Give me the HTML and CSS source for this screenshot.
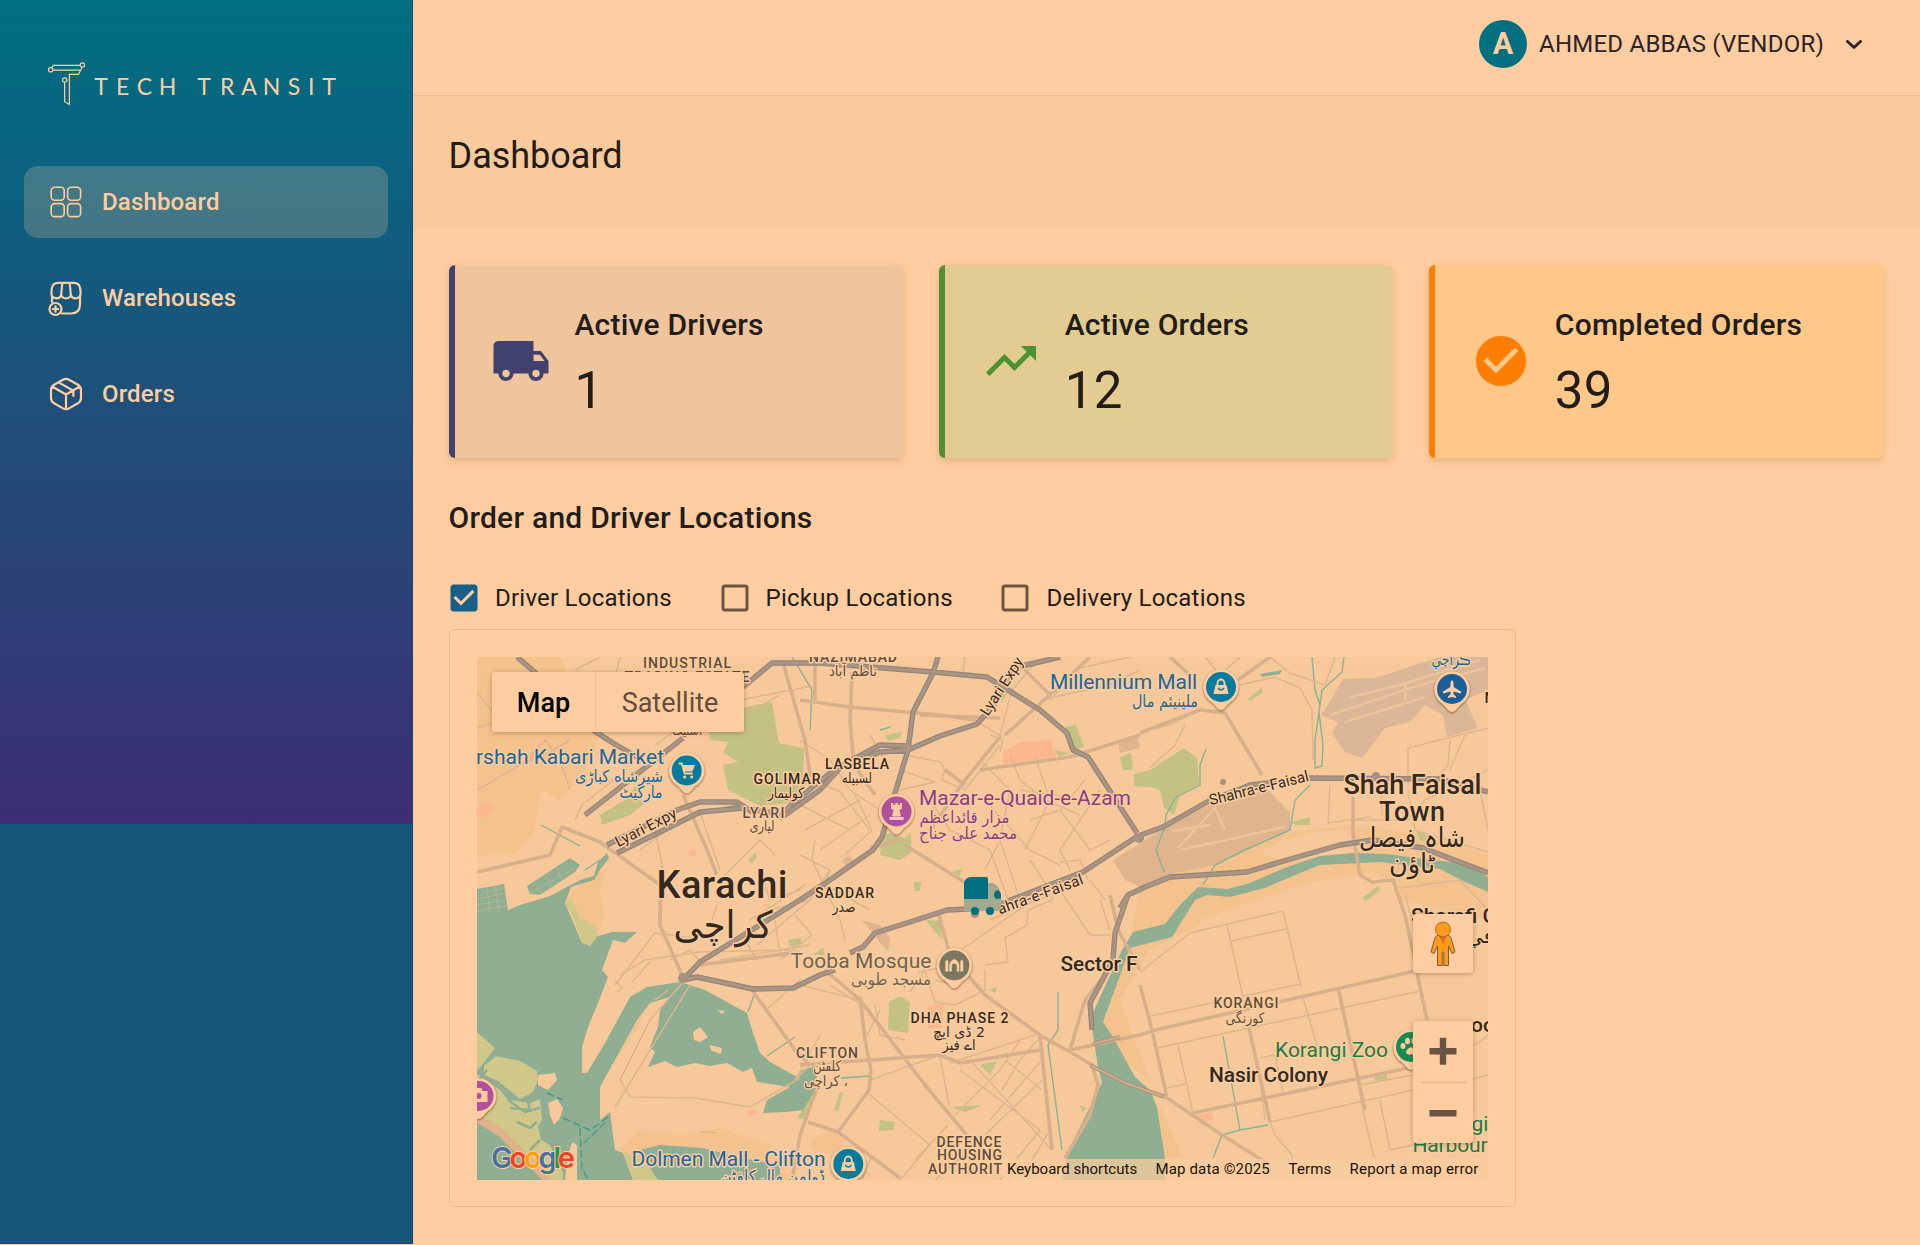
FILE: index.html
```html
<!DOCTYPE html>
<html lang="en">
<head>
<meta charset="utf-8">
<title>Tech Transit - Dashboard</title>
<link rel="stylesheet" href="styles.css">
</head>
<body>
<div class="app">
  <aside class="sidebar">
    <div class="sidebar-panel">
      <svg class="logo" width="300" height="50" viewBox="44 58 300 50" role="img" aria-label="Tech Transit">
        <g class="logo-mark">
          <circle cx="50.7" cy="69.8" r="2.2"/><circle cx="82.4" cy="65" r="2.2"/><circle cx="64.7" cy="80" r="2.2"/>
          <path d="M51.5 67.5 53.5 65.4H80M53 70.2H80M82 67.4 78.4 74.4H69.4V104.5L64.6 101.7V82.5"/>
        </g>
        <text class="logo-word" y="95" x="101 122.7 144.5 167.5 204 227.3 249 271.5 294 311.2 329">TECHTRANSIT</text>
      </svg>
      <nav class="nav">
        <a class="nav-item active">
          <svg class="nav-icon" viewBox="0 0 32 32"><rect x="1.2" y="1.2" width="13" height="13" rx="3.4"/><rect x="17.6" y="1.2" width="13" height="13" rx="3.4"/><rect x="1.2" y="17.6" width="13" height="13" rx="3.4"/><rect x="17.6" y="17.6" width="13" height="13" rx="3.4"/></svg>
          <span>Dashboard</span>
        </a>
        <a class="nav-item">
          <svg class="nav-icon bold" viewBox="0 0 32 32"><path d="M8 .9H24Q29.500 .9 30.200 6.500L30.600 11Q30.600 16 26 16.300 21.300 16.300 20.800 12.500 20.400 16.300 16 16.300 11.600 16.300 11.200 12.500 10.700 16.300 6 16.300 1.400 16 1.400 11L1.800 6.500Q2.500.9 8 .9ZM12.300 1 11.200 12.500M19.700 1 20.800 12.500M2 14.500V20M30 14.500V22Q30 31.500 21 31.500H12"/><circle cx="5.500" cy="27" r="6"/><path d="M5.500 24.300V29.700M2.800 27H8.200"/></svg>
          <span>Warehouses</span>
        </a>
        <a class="nav-item">
          <svg class="nav-icon bold" viewBox="0 0 32 32"><path d="M13 1.700Q16 0 19 1.700L27.500 6.500Q31 8.500 31 12V20Q31 23.500 27.500 25.500L19 30.400Q16 32 13 30.400L4.500 25.500Q1 23.500 1 20V12Q1 8.500 4.500 6.500ZM2.500 8.700 16 16.500 29.500 8.700M16 16.500V31M9 4.600 23.400 12.800V18"/></svg>
          <span>Orders</span>
        </a>
      </nav>
    </div>
  </aside>

  <main class="main">
    <header class="topbar">
      <div class="avatar">A</div>
      <span class="user">AHMED ABBAS (VENDOR)</span>
      <svg class="chevron" width="16" height="10" viewBox="0 0 16 10"><path d="M1.500 1.500 8 7.500 14.500 1.500"/></svg>
    </header>
    <div class="title-band"><h1>Dashboard</h1></div>

    <div class="content">
      <section class="stats">
        <article class="stat drivers">
          <svg class="stat-icon" viewBox="0 0 24 24"><path d="M20 8h-3V4H3c-1.100 0-2 .9-2 2v11h2c0 1.660 1.340 3 3 3s3-1.340 3-3h6c0 1.660 1.340 3 3 3s3-1.340 3-3h2v-5zM6 18.500c-.83 0-1.500-.67-1.500-1.500s.67-1.500 1.500-1.500 1.500.67 1.500 1.500-.67 1.500-1.500 1.500m13.500-9 1.960 2.500H17V9.500zm-1.500 9c-.83 0-1.500-.67-1.500-1.500s.67-1.500 1.500-1.500 1.500.67 1.500 1.500-.67 1.500-1.500 1.500"/></svg>
          <div class="stat-text"><h2>Active Drivers</h2><p class="value">1</p></div>
        </article>
        <article class="stat active-orders">
          <svg class="stat-icon" viewBox="0 0 24 24"><path d="m16 6 2.290 2.290-4.880 4.880-4-4L2 16.590 3.410 18l6-6 4 4 6.300-6.290L22 12V6z"/></svg>
          <div class="stat-text"><h2>Active Orders</h2><p class="value">12</p></div>
        </article>
        <article class="stat completed">
          <svg class="stat-icon" viewBox="0 0 24 24"><path d="M12 2C6.480 2 2 6.480 2 12s4.480 10 10 10 10-4.480 10-10S17.520 2 12 2m-2 15-5-5 1.410-1.410L10 14.170l7.590-7.590L19 8z"/></svg>
          <div class="stat-text"><h2>Completed Orders</h2><p class="value">39</p></div>
        </article>
      </section>

      <h2 class="section-title">Order and Driver Locations</h2>
      <div class="filters">
        <label class="filter"><svg class="check on" viewBox="0 0 24 24"><path d="M19 3H5c-1.110 0-2 .9-2 2v14c0 1.100.89 2 2 2h14c1.110 0 2-.9 2-2V5c0-1.100-.89-2-2-2m-9 14-5-5 1.410-1.410L10 14.170l7.590-7.590L19 8z"/></svg>Driver Locations</label>
        <label class="filter"><svg class="check" viewBox="0 0 24 24"><path d="M19 5v14H5V5zm0-2H5c-1.100 0-2 .9-2 2v14c0 1.100.9 2 2 2h14c1.100 0 2-.9 2-2V5c0-1.100-.9-2-2-2"/></svg>Pickup Locations</label>
        <label class="filter"><svg class="check" viewBox="0 0 24 24"><path d="M19 5v14H5V5zm0-2H5c-1.100 0-2 .9-2 2v14c0 1.100.9 2 2 2h14c1.100 0 2-.9 2-2V5c0-1.100-.9-2-2-2"/></svg>Delivery Locations</label>
      </div>

      <section class="map-card">
        <div class="map">
          <svg class="map-canvas" width="1011" height="523" viewBox="477 657 1011 523">
            <defs>
              <path id="pin" d="M0 23C-3 23-4.500 20-9 15.500A17.800 17.800 0 1 1 9 15.500C4.500 20 3 23 0 23Z"/>
            </defs>
            <!-- built-up land -->
            <g class="land-dark">
              <path d="M477 657H560L575 690 600 735 585 770 560 800 540 790 535 830 515 855 500 850 477 858Z"/>
              <path d="M565 900 585 880 607 868 600 890 604 915 598 935 585 930Z"/>
              <path d="M1140 890 1200 855 1270 835 1350 825 1430 835 1488 855V920H1430L1300 905 1200 925 1150 950 1120 1000 1150 1080 1120 1060 1103 1022 1130 940Z"/>
              <path d="M620 1150 640 1130 680 1135 720 1128 770 1145 790 1180H640Z"/>
              <path d="M812 1140 830 1130 845 1140 835 1155 812 1150Z"/>
              <path d="M1157 1100 1180 1150 1182 1158H1165ZM630 1003 650 1000 637 1030 605 1075 600 1070Z"/>
            </g>
            <path class="land" d="M1263 850Q1300 830 1345 830L1370 850 1330 855 1285 862 1265 855ZM1200 920 1300 885 1370 872 1395 880 1400 900 1488 920V1000H1200Z"/>
            <!-- airfields -->
            <g class="airfield">
              <path d="M1343 679 1375 678 1415 665 1440 657H1488V690L1465 700 1478 728 1447 737 1443 715 1425 705 1410 722 1385 728 1372 745 1362 758 1345 752 1332 733 1338 722 1321 715 1328 705Z"/>
              <path class="airfield-alt" d="M1113 860 1165 828 1215 802 1268 790 1290 812V830L1215 865 1175 873 1140 887 1125 880Z"/>
              <path class="airfield-alt" d="M1118 743 1138 737 1140 748 1120 753ZM842 860 850 855 854 862 846 866ZM862 920 880 925 890 938 888 952 870 930Z"/>
            </g>
            <path class="runway" d="M1330 715 1420 685 1485 668M1350 697 1400 685 1480 660M1345 722 1425 697M1172 831 1210 825M1178 848 1215 808 1225 830M1180 850 1285 827M1405 682V700"/>
            <!-- commercial -->
            <path class="commercial" d="M1003 752 1020 742 1050 740 1056 757 1030 761 1003 764ZM477 808 490 801 495 808 485 818 477 816ZM688 852 695 848 696 856 690 857ZM928 1005 944 1003 942 1028 928 1028ZM748 1110 756 1109 756 1115 748 1115ZM1195 1115 1212 1112 1214 1120 1200 1122ZM762 905 770 903 768 909Z"/>
            <!-- parks -->
            <g class="park">
              <path d="M706 715 772 702 779 743 804 748 803 780 790 803 760 806 728 790 723 765 738 762 723 752 728 742 710 740Z"/>
              <path d="M602 825 600 815 625 800 636 785 640 800 645 803 630 815ZM748 860 755 853 757 856 752 864ZM885 735 902 732 900 738 888 741ZM1066 727 1076 725 1084 747 1075 750ZM1055 750 1070 753 1058 757ZM1134 774 1150 770 1184 748 1197 758 1199 784 1180 795 1174 815 1164 808 1160 790 1150 787 1134 786ZM1120 757 1131 753 1133 770 1123 770ZM998 695 1008 692 1002 702ZM1247 700 1262 687 1262 693 1250 701ZM882 832 905 838 911 832 911 853 900 860 880 855ZM952 872 962 869 960 876ZM914 882 921 882 920 891 914 891ZM1291 822 1310 817V825H1296ZM1417 830 1427 835 1425 843 1418 838ZM1362 898 1378 886 1380 890 1366 901Z"/>
              <path d="M889 1002 900 996 910 1002 908 1033 888 1030ZM788 940 802 938 800 948 790 946ZM812 955 823 948 825 955ZM926 920 940 921 942 939 935 932ZM980 1065 997 1061 990 1075ZM988 990 997 987 996 993ZM880 1120 895 1122 894 1130 879 1131ZM834 1110 840 1092 843 1093 838 1111ZM950 1107 982 1105 965 1112ZM1080 1105 1087 1108 1082 1113ZM1374 1077 1387 1074V1079L1375 1081ZM797 1118 815 1090 817 1092 805 1120Z"/>
            </g>
            <!-- sea, creeks and river -->
            <g class="water">
              <path d="M477 889 504 884 508 910 520 905 550 896 580 880 594 876 598 862 607 853 609 858 600 870 594 880 571 887 565 903 582 943 598 936 612 932H637L625 943 613 940 602 970 608 977 598 1003 588 1027 582 1047V1073H587L605 1043 630 997 647 987 680 982 705 990 747 1013 753 1033 760 1053 770 1062 797 1077 802 1070 815 1066 818 1085 803 1110 785 1112 763 1113 767 1100 790 1087 757 1082 752 1068 743 1072 727 1063 710 1066 695 1063 677 1067 665 1061 648 1067 655 1052 650 1047 658 1027 660 1010 670 997 650 1003 637 1020 600 1087V1120L610 1112 615 1150 623 1153 633 1180H477Z"/>
              <path d="M640 1150 660 1145 703 1148 737 1157 780 1165V1180H657Z"/>
              <path d="M527 886 570 858 580 865 575 872 540 895 530 894Z"/>
              <path d="M1488 877 1460 863 1423 859 1387 854 1353 853 1320 856 1287 867 1250 883 1228 889 1198 887 1180 905 1165 924 1133 932 1122 950 1100 997 1093 1013 1092 1028 1098 1067 1102 1083 1077 1133 1066 1160 1062 1180H1165V1158L1157 1107 1150 1090 1135 1077 1113 1037 1103 1022 1130 948 1172 937 1195 900 1207 895 1230 897 1265 888 1300 873 1320 865 1380 862 1440 869 1465 882 1488 892Z"/>
              <path d="M1260 674 1282 670 1280 674 1262 677ZM1170 874 1205 875 1200 877H1170Z"/>
            </g>
            <path class="pond-line" d="M483 893 503 888M477 899 505 893M477 905 506 900M477 911 507 906M487 887 490 912M495 886 499 910M533 883 542 894M545 876 552 888M557 867 562 882M530 893 575 868"/>
            <path class="land" d="M693 1032 700 1027 708 1037 700 1042 694 1040ZM709 1045 722 1048 721 1054 712 1051ZM717 1010 725 1011 722 1014ZM538 1075 555 1073 557 1080 548 1090 538 1085ZM548 1103 557 1099 563 1108 560 1118 554 1125 550 1115ZM572 1142 577 1145V1180H565L567 1160Z"/>
            <g class="marsh">
              <path d="M477 1032 495 1048 478 1070 477 1066ZM484 1066 496 1056 520 1061 537 1071 538 1080 533 1092 520 1099 509 1090 498 1081 484 1075ZM565 902 573 900 580 918 595 925 598 936 590 946 582 943 573 917ZM477 1074 500 1090 508 1100 530 1103 540 1099 542 1120 538 1126 541 1140 550 1145 563 1172V1180H545L490 1125 477 1118ZM623 1153 640 1155 658 1180H634Z"/>
            </g>
            <path class="marsh-channel" d="M508 1100 525 1112 540 1108M510 1108 530 1110 527 1098M517 1122 530 1128 537 1122M477 1082 487 1070M530 1150 540 1140"/>
            <path class="shore" d="M477 1118 500 1132 548 1180"/>
            <path class="stream" d="M1312 657 1315 690 1320 705 1315 740 1315 768 1322 766 1323 745 1319 712 1322 690 1342 672 1344 657M1206 749 1200 765V785L1175 798 1166 815 1165 827 1156 850 1164 872M1310 785 1295 800 1290 830 1245 850 1215 865 1203 885M792 657 812 690 810 730M880 730 890 727M541 825 580 846M757 987 748 1012M767 1056 795 1037M841 1078 870 1076M1058 992V1030L1048 1045 1062 1150M1223 1036 1240 1130 1268 1125M1240 1130 1222 1135 1213 1158M585 870 600 860M680 820 740 804"/>
            <path class="ferry" d="M547 1093 563 1100M563 1118 590 1130 608 1117M580 1128 582 1168 588 1180M584 1143 608 1120"/>

            <!-- local streets -->
            <g class="minor">
              <path d="M477 692 495 715M477 728 500 720M477 790 520 765 545 755 570 740M520 765 545 740 560 760 570 790M530 760 540 745M575 670 600 657M620 657 610 700M735 720 780 695M740 700 812 686M655 745 690 720M575 820 582 805 620 775M700 812 720 870M640 850 680 820M655 830 665 880 660 920"/>
              <path d="M800 740 830 760 850 790 880 810M870 735 885 760M905 755 940 762 945 770 942 780 965 790 1000 745M990 735 1003 740 1000 752M975 720 1002 737M965 657 963 672M1038 660 1012 690 1000 735M1140 670 1110 685 1040 700M1050 700 1080 668 1130 657"/>
              <path d="M900 770 935 782 900 790M980 760 1010 790 1000 840 985 870M1010 755 1020 780 1045 800 1080 815M1035 757 1050 800 1025 850M1085 780 1060 810 1030 820M1100 790 1060 850 1070 870M1020 790 1090 800M985 800 1030 850 1060 865M1060 810 1090 850 1110 840M930 800 950 830 990 850 1010 905M1000 840 1020 900"/>
              <path d="M800 775 840 792 870 830M805 830 860 800M820 850 870 815M800 855 830 870 825 885 870 910M855 795 872 830 845 855M815 840 812 860 840 920 845 940M760 870 770 900 800 890M770 910 810 900 830 870M800 805 850 830M720 880 760 840 775 855M750 920 805 885"/>
              <path d="M1240 657 1220 675M1220 675 1205 657M1270 657 1290 673 1325 685 1335 657M1185 725 1175 745 1150 768M1408 785V748L1488 728M1450 740 1448 765 1432 785M1465 735 1450 770M1352 820H1408L1425 800 1488 770M1330 785 1328 823 1370 817M1382 782V815M1408 790 1415 830 1488 852M1480 790 1488 830M1400 888 1460 880 1488 910M1405 895 1412 920"/>
              <path d="M961 950 1055 885 1052 900 1028 910 1027 925 1005 938 1008 962 985 965M990 920 1050 895M1060 890 1090 935H1110M1105 900 1090 880M918 972 940 968 960 970M910 992 925 970 935 1002 955 1005 985 990 985 970M935 980 955 985M905 1040 880 1035 875 1005"/>
              <path d="M800 985 860 1000M830 985 870 1010M867 1035 880 1010M870 1080 940 1055M940 1057 949 1105M950 1063 1035 1035M960 1070 1040 1130 1000 1180M990 1120 1040 1062M955 1115 1000 1070 1020 1040M970 1060 1050 1148M985 1135 1042 1080M1005 1060 1042 1090M1042 1035 1020 1060 1002 1090M870 1095 930 1145 900 1180M915 1160 948 1125M935 1180 980 1140M1050 1130 1020 1180M850 1160 870 1175M872 1155 862 1180"/>
              <path d="M615 985 655 933M655 933 695 938M620 975 645 960 700 952 790 950M632 982 650 962M615 980 622 988 617 992M700 962 690 950 670 960M690 985 615 1107M685 980 650 1020 620 1080 630 1097 695 1098 750 1107 800 1078M668 990 655 1000M766 1010 800 980M700 1132 717 1133M757 960 745 940M757 945 810 900M775 920 780 955M795 915 812 935 780 960M717 905 712 920M720 960 810 945M820 1035 795 1080 810 1065"/>
              <path d="M1140 972 1190 933 1283 911 1301 987M1227 925 1243 997M1231 941 1286 929M1151 1016 1300 984M1157 1048 1420 991M1303 998 1320 1055M1340 990 1365 1120 1374 1158M1178 1045 1193 1113M1167 1088 1185 1084M1260 1058 1275 1055 1283 1092M1270 1122 1413 1090M1380 1100 1390 1150 1413 1145M1360 1085 1413 1075M1470 1080 1488 1075M1270 1122 1275 1135 1292 1155 1293 1180M1475 1045 1488 1035M1260 1080 1265 1120"/>
              <path d="M1140 732 1170 725 1195 712M1240 685 1275 677 1300 688 1312 710 1313 760M1030 860 1050 890M1110 930 1100 900M1088 880 1080 860 1060 862"/>
            </g>
            <g class="arterial">
              <path d="M477 872 550 855 562 827 600 842 660 885V925L682 975M683 795 705 845 717 875M783 663 805 740 810 775 780 820M815 657V700M800 700 850 707 940 715 975 720M852 672 850 720 854 765 875 795M920 715 1000 718M1000 737 965 780 930 830M945 770 965 785M980 770 1070 757 1140 735M1005 735 1050 695 1090 657M1050 695 1020 665M1170 657 1190 675M1238 680 1270 657M1140 733 1200 710 1225 713 1262 775M1353 797V835L1360 875 1372 882 1393 880 1405 915 1427 1020M900 840 870 848M905 845 945 870 985 895M682 977 700 965 800 952M825 970 860 1000 925 1085 975 1145M860 997 865 1040 871 1070 869 1090 838 1132M800 1065 940 1055 960 1063 1040 1050M752 990 795 1050 810 1065M818 1085 800 1135 792 1180M808 1122 838 1132 900 1178M938 912 950 955 985 995 1040 1035 1070 1052M1040 1035 1052 1150M1070 1050 1140 1035 1155 1030 1420 970M1070 1050 1085 1000 1105 975M1140 985 1152 1030 1167 1098 1222 1135 1270 1165M1140 970 1118 930 1110 895M1193 1113 1413 1067M1249 1028 1270 1122M1338 988 1365 1110M1070 1052 1092 1065 1098 1085 1090 1115 1065 1158"/>
            </g>
            <g class="bridge-case"><path d="M1090 1065 1125 1083 1165 1097M1093 1044 1120 1037"/></g>
            <path class="bridge" d="M1090 1065 1125 1083 1165 1097M1093 1044 1120 1037"/>
            <!-- highways -->
            <g class="hwy-case">
              <path d="M517 657 538 675M593 730 613 743 637 757M585 815 683 738M743 687 772 663H820L933 672 987 677 1040 710 1067 733 1073 750 1088 757 1137 833M617 853 660 832 700 812 743 808 785 815 820 790 840 768 880 752 908 750 940 736 977 724 993 706 1007 683 1018 667 1060 657M607 845 677 810 700 802 737 802 752 812M780 815 815 785 837 768 880 745 908 746M938 657 933 673 913 712 908 750 895 793 882 837 873 850 827 882 800 900 700 962 683 980 697 977 753 989 793 988 820 975 835 970M850 953 863 947 875 933 910 922 947 910 990 908 1083 872 1138 836 1163 827 1207 802 1250 785 1310 778 1440 779 1488 792M1120 908 1128 895 1145 887 1170 877 1247 872 1287 860 1340 845 1373 840 1423 848 1488 873M1128 895 1115 933 1113 960 1090 1003 1092 1030"/>
            </g>
            <path class="hwy-fill" d="M517 657 538 675M593 730 613 743 637 757M585 815 683 738M743 687 772 663H820L933 672 987 677 1040 710 1067 733 1073 750 1088 757 1137 833M617 853 660 832 700 812 743 808 785 815 820 790 840 768 880 752 908 750 940 736 977 724 993 706 1007 683 1018 667 1060 657M607 845 677 810 700 802 737 802 752 812M780 815 815 785 837 768 880 745 908 746M938 657 933 673 913 712 908 750 895 793 882 837 873 850 827 882 800 900 700 962 683 980 697 977 753 989 793 988 820 975 835 970M850 953 863 947 875 933 910 922 947 910 990 908 1083 872 1138 836 1163 827 1207 802 1250 785 1310 778 1440 779 1488 792M1120 908 1128 895 1145 887 1170 877 1247 872 1287 860 1340 845 1373 840 1423 848 1488 873M1128 895 1115 933 1113 960 1090 1003 1092 1030"/>
            <g class="junction"><circle cx="1139" cy="838" r="5"/><circle cx="683" cy="978" r="5"/><circle cx="1376" cy="776" r="4"/><circle cx="975" cy="914" r="4"/><circle cx="1223" cy="782" r="3"/></g>

            <!-- place names -->
            <g class="label area soft">
              <text x="687" y="668" textLength="88">INDUSTRIAL</text>
              <text x="687" y="682" textLength="125">TRADING ESTATE</text>
              <text x="853" y="662" textLength="88">NAZIMABAD</text>
              <text x="763.500" y="818" textLength="42">LYARI</text>
              <text x="827" y="1058" textLength="62">CLIFTON</text>
              <text x="1246" y="1008" textLength="65">KORANGI</text>
              <text x="969" y="1147" textLength="65">DEFENCE</text>
              <text x="969.500" y="1160" textLength="65">HOUSING</text>
              <text x="965" y="1174" textLength="74">AUTHORIT</text>
              <text x="853" y="676" class="ar" textLength="48" lengthAdjust="spacingAndGlyphs">ناظم آباد</text>
              <text x="687" y="735" class="ar" textLength="30" lengthAdjust="spacingAndGlyphs">اسٹیٹ</text>
              <text x="762" y="831" class="ar" textLength="25" lengthAdjust="spacingAndGlyphs">لیاری</text>
              <text x="827" y="1071" class="ar" textLength="28" lengthAdjust="spacingAndGlyphs">کلفٹن</text>
              <text x="826" y="1086" class="ar" textLength="44" lengthAdjust="spacingAndGlyphs">، کراچی</text>
              <text x="1245" y="1023" class="ar" textLength="39" lengthAdjust="spacingAndGlyphs">کورنگی</text>
            </g>
            <g class="label area">
              <text x="787" y="784" textLength="67">GOLIMAR</text>
              <text x="857" y="769" textLength="64">LASBELA</text>
              <text x="844.500" y="898" textLength="59">SADDAR</text>
              <text x="959.500" y="1023" textLength="98">DHA PHASE 2</text>
              <text x="786" y="798" class="ar" textLength="36" lengthAdjust="spacingAndGlyphs">کولیمار</text>
              <text x="857" y="783" class="ar" textLength="30" lengthAdjust="spacingAndGlyphs">لسبیله</text>
              <text x="844" y="912" class="ar" textLength="23" lengthAdjust="spacingAndGlyphs">صدر</text>
              <text x="959" y="1037" class="ar" textLength="52" lengthAdjust="spacingAndGlyphs">2 ڈی ایچ</text>
              <text x="959" y="1050" class="ar" textLength="33" lengthAdjust="spacingAndGlyphs">اے فیز</text>
            </g>
            <g class="label city">
              <text x="722" y="898" class="xl" textLength="131">Karachi</text>
              <text x="723" y="938" class="xl ar" textLength="99" lengthAdjust="spacingAndGlyphs">کراچی</text>
              <text x="1412.500" y="794" class="lg" textLength="138">Shah Faisal</text>
              <text x="1412" y="821" class="lg" textLength="66">Town</text>
              <text x="1412" y="847" class="lg ar" textLength="106" lengthAdjust="spacingAndGlyphs">شاہ فیصل</text>
              <text x="1412" y="873" class="lg ar" textLength="46" lengthAdjust="spacingAndGlyphs">ٹاؤن</text>
              <text x="1099" y="971" textLength="77">Sector F</text>
              <text x="1268.500" y="1082" textLength="119">Nasir Colony</text>
              <text x="1411" y="923" class="start">Sharafi Goth</text>
              <text x="1480" y="943" class="ar">في</text>
              <text x="1471" y="1032" class="start">oor</text>
              <text x="1484.500" y="703" class="start small">M</text>
            </g>
            <g class="label road">
              <text transform="translate(648 832) rotate(-27)" textLength="67">Lyari Expy</text>
              <text transform="translate(1006 689) rotate(-57)" textLength="66">Lyari Expy</text>
              <text transform="translate(1042 899) rotate(-20)" textLength="90">ahra-e-Faisal</text>
              <text transform="translate(1260 793) rotate(-14)" textLength="102">Shahra-e-Faisal</text>
            </g>
            <g class="label poi blue">
              <text x="570" y="764" textLength="188">rshah Kabari Market</text>
              <text x="1123.500" y="689" textLength="147">Millennium Mall</text>
              <text x="728.500" y="1166" textLength="194">Dolmen Mall - Clifton</text>
              <g class="ar">
                <text x="619" y="782" textLength="88" lengthAdjust="spacingAndGlyphs">شیرشاه کباڑی</text>
                <text x="641" y="798" textLength="43" lengthAdjust="spacingAndGlyphs">مارکیٹ</text>
                <text x="1165" y="707" textLength="66" lengthAdjust="spacingAndGlyphs">ملینیئم مال</text>
                <text x="773" y="1182" textLength="104" lengthAdjust="spacingAndGlyphs">ڈولمن مال کلفٹن</text>
                <text x="1451" y="665" textLength="39" lengthAdjust="spacingAndGlyphs">ڪراچي</text>
              </g>
            </g>
            <g class="label poi purple">
              <text x="1025" y="805" textLength="212">Mazar-e-Quaid-e-Azam</text>
              <g class="ar">
                <text x="964.500" y="823" textLength="90" lengthAdjust="spacingAndGlyphs">مزار قائداعظم</text>
                <text x="968" y="839" textLength="98" lengthAdjust="spacingAndGlyphs">محمد علی جناح</text>
              </g>
            </g>
            <g class="label poi grey">
              <text x="861" y="968" textLength="141">Tooba Mosque</text>
              <text x="891" y="985" class="ar" textLength="80" lengthAdjust="spacingAndGlyphs">مسجد طوبی</text>
            </g>
            <g class="label poi green">
              <text x="1331.500" y="1057" textLength="113">Korangi Zoo</text>
              <text x="1480" y="1131">gi</text>
              <text x="1450" y="1152" textLength="75">Harbour</text>
            </g>

            <!-- pins -->
            <g transform="translate(686.700 770.500)"><use href="#pin" class="pin"/><circle r="15" fill="#057c9f"/><path class="glyph-line" d="M-8-7H-5L-2 3H6M-4.500-4.500H7L5 0H-3"/><circle class="glyph" cx="-2" cy="6.500" r="1.600"/><circle class="glyph" cx="5" cy="6.500" r="1.600"/><path class="glyph" d="M-4-4H6L4.500.5H-3Z"/></g>
            <g transform="translate(1221 687)"><use href="#pin" class="pin"/><circle r="15" fill="#057c9f"/><path class="glyph" d="M-5.500-2H5.500L7.500 7H-7.500Z"/><path class="glyph-line" d="M-3.500-2V-4A3.500 3.500 0 0 1 3.500-4V-2"/><path d="M-3 1Q0 5 3 1" fill="none" stroke="#057c9f" stroke-width="1.500"/></g>
            <g transform="translate(848.300 1164)"><use href="#pin" class="pin"/><circle r="15" fill="#057c9f"/><path class="glyph" d="M-5.500-2H5.500L7.500 7H-7.500Z"/><path class="glyph-line" d="M-3.500-2V-4A3.500 3.500 0 0 1 3.500-4V-2"/><path d="M-3 1Q0 5 3 1" fill="none" stroke="#057c9f" stroke-width="1.500"/></g>
            <g transform="translate(1452 689)"><use href="#pin" class="pin"/><circle r="15" fill="#1b5f99"/><path class="glyph" d="M0-9Q1.600-8 1.600-5V-2L9 2.500V4.500L1.600 2.500V5.500L4 7.500V9L0 8 -4 9V7.500L-1.600 5.500V2.500L-9 4.500V2.500L-1.600-2V-5Q-1.600-8 0-9Z"/></g>
            <g transform="translate(896.500 811.500)"><use href="#pin" class="pin"/><circle r="15" fill="#b2519b"/><path class="glyph" d="M-5.500-8.500H-3.300V-6.500H-1.300V-8.500H1.300V-6.500H3.300V-8.500H5.500V-3L3-1.500 4.500 5H-4.500L-3-1.500-5.500-3ZM-7 5.500H7V8.500H-7Z"/></g>
            <g transform="translate(954.300 965.500)"><use href="#pin" class="pin"/><circle r="15" fill="#7b7763"/><path class="glyph" d="M-9 6V-4L-7.500-6-6-4V6ZM-5 6V0Q-5-4 0-6.500 5-4 5 0V6H2.500V1Q2.500-2 0-2T-2.500 1V6ZM6 6V-4L7.500-6 9-4V6Z"/></g>
            <g transform="translate(478.500 1096)"><use href="#pin" class="pin"/><circle r="15" fill="#b2519b"/><path class="glyph" d="M-8-5H-3L-2-8H3L4-5H9V6H-8Z"/><circle r="3" fill="#b2519b"/></g>
            <g transform="translate(1411 1047)"><use href="#pin" class="pin"/><circle r="15" fill="#178c52"/><path class="glyph" d="M-5 6Q-5 2 0 0 5 2 5 6 2 9 0 7-2 9-5 6Z"/><ellipse class="glyph" cx="-8" cy="-1" rx="2.500" ry="3"/><ellipse class="glyph" cx="-3.500" cy="-6" rx="2.500" ry="3.200"/><ellipse class="glyph" cx="3" cy="-6" rx="2.500" ry="3.200"/></g>

            <!-- driver marker -->
            <g class="truck">
              <path fill="#a5a98d" d="M964 895H988V883H992Q1001 885 1001 898V909Q1001 911 999 911H964Z"/>
              <path d="M964 885Q964 877 972 877H986Q988 877 988 879V899H964ZM1001 898.500V894L999 890.500H996Q994 892 994 896L996 899Z"/>
              <circle cx="975" cy="911" r="4"/><circle cx="990" cy="911" r="4"/>
            </g>
            <text class="google" x="491" y="1168" textLength="84"><tspan fill="#4472a8">G</tspan><tspan fill="#ec4427">o</tspan><tspan fill="#ff9d0a">o</tspan><tspan fill="#4472a8">g</tspan><tspan fill="#31914a">l</tspan><tspan fill="#ec4427">e</tspan></text>
          </svg>

          <div class="map-type"><span class="selected">Map</span><span class="other">Satellite</span></div>
          <div class="pegman">
            <svg width="26" height="46" viewBox="0 0 26 46"><path d="M8 14H18Q21 15 22 20L25 31 22 32.500 18.500 25V44.500H13.800V31H12.200V44.500H7.500V25L4 32.500 1 31 4 20Q5 15 8 14Z" fill="#ff9a1a" stroke="#7d5b34" stroke-width="1"/><path d="M9 14.500H17L13 23Z" fill="#e66a1b"/><circle cx="13" cy="8.500" r="7.500" fill="#ff9a1a" stroke="#8a5f2c" stroke-width=".8"/></svg>
          </div>
          <div class="zoom">
            <svg width="60" height="122" viewBox="0 0 60 122"><path d="M16.500 30.200H43.500M30 16.700V43.700M16.500 92.300H43.500" stroke="#6a5443" stroke-width="6.400"/><path d="M8 61.500H53" stroke="#e2b690" stroke-width="1.500"/></svg>
          </div>
          <div class="map-footer"><span class="f-keys">Keyboard shortcuts</span><span class="f-data">Map data ©2025</span><span class="f-terms">Terms</span><span class="f-report">Report a map error</span></div>
        </div>
      </section>
    </div>
  </main>
</div>
</body>
</html>
```
FILE: styles.css
```css
* { box-sizing: border-box; }

body {
  margin: 0;
  background: #ffcd9f;
  color: #221d18;
  font-family: Roboto, "Liberation Sans", sans-serif;
  font-size: 24px;
}

h1, h2, p { margin: 0; font-weight: 400; }

.app { display: flex; height: 1245px; overflow: hidden; }

/* sidebar */
.sidebar {
  width: 413px;
  flex: none;
  height: 1244px;
  background: #17577a;
  border-right: 1px solid #1d4273;
  border-bottom: 1px solid #3b3174;
}
.sidebar-panel {
  height: 823.500px;
  padding: 58px 24px 0;
  background: linear-gradient(#007080, #0b6280 21%, #1f4f7a 50%, #3d2d75);
}
.logo { display: block; margin-left: 20px; }
.logo-mark { fill: none; stroke: #ffcd9f; stroke-width: 1.200; }
.logo-word {
  fill: #ffcd9f;
  font: 400 23px Lato, sans-serif;
  text-anchor: middle;
}
.nav { margin-top: 58px; display: flex; flex-direction: column; gap: 24px; }
.nav-item {
  display: flex;
  align-items: center;
  gap: 20px;
  width: 364px;
  height: 72px;
  padding-left: 26px;
  border-radius: 14px;
  color: #ffcd9f;
  font-weight: 500;
  letter-spacing: .16px;
}
.nav-item.active { background: rgba(255, 205, 159, .22); }
.nav-icon { width: 32px; height: 32px; overflow: visible; fill: none; stroke: #ffcd9f; stroke-width: 1.600; stroke-linecap: round; stroke-linejoin: round; }
.nav-icon.bold { stroke-width: 2.200; }

/* header */
.main { flex: 1; min-width: 0; }
.topbar {
  display: flex;
  justify-content: flex-end;
  align-items: flex-start;
  height: 96px;
  padding: 20px 58px 0 0;
  border-bottom: 1px solid #edba8f;
}
.avatar {
  width: 48px;
  height: 48px;
  border-radius: 50%;
  background: #007080;
  color: #ffcd9f;
  font-weight: 700;
  font-size: 30.500px;
  line-height: 48px;
  text-align: center;
}
.user { margin-left: 12px; line-height: 48px; letter-spacing: .225px; color: #2b2329; }
.chevron { margin: 19.500px 0 0 22px; fill: none; stroke: #2b2329; stroke-width: 3; stroke-linecap: round; stroke-linejoin: round; }
.title-band { height: 132.500px; padding: 36px 36px 0 35.500px; background: #faca9c; }
.title-band h1 { font-size: 36px; line-height: 48px; }

.content { padding: 36px 37px 0 35.500px; }

/* stat cards */
.stats { display: grid; grid-template-columns: repeat(3, 1fr); gap: 36px; }
.stat {
  display: flex;
  align-items: center;
  gap: 24px;
  height: 193px;
  padding: 0 36px 1px;
  border-left: 6px solid;
  border-radius: 6px;
  box-shadow: 0 3px 7px rgba(120, 70, 20, .2);
}
.stat-icon { width: 60px; height: 60px; flex: none; fill: currentColor; }
.stat-text { padding-top: 1.500px; }
.stat h2 { color: #221d18; font-size: 30px; line-height: 48px; font-weight: 500; letter-spacing: .225px; margin-bottom: 10px; }
.stat .value { color: #221d18; font-size: 51px; line-height: 63px; letter-spacing: .37px; }
.drivers { color: #40416f; background: #f0c49d; }
.active-orders { color: #4c9132; background: #e2cc91; }
.completed { color: #ff7d00; background: #ffc889; }

.section-title { margin-top: 36px; font-size: 30px; line-height: 48px; font-weight: 500; letter-spacing: .24px; }

.filters { display: flex; gap: 44.700px; margin: 38px 0 13.500px -2.500px; }
.filter { display: flex; align-items: center; gap: 13px; height: 36px; letter-spacing: .225px; }
.check { width: 36px; height: 36px; fill: #6b5342; }
.check.on { fill: #18608a; }

/* map */
.map-card {
  width: 1067px;
  height: 578px;
  margin-left: .5px;
  padding: 27px;
  border: 1px solid #e9b98f;
  border-radius: 6px;
}
.map { position: relative; width: 1011px; height: 523px; overflow: hidden; background: #f7c99a; }
.map-canvas { display: block; }
.land { fill: #f7c99a; }
.land-dark { fill: #f4c28c; }
.airfield { fill: #dcb797; }
.airfield-alt { fill: #e0b58e; }
.runway { fill: none; stroke: #ecc39b; stroke-width: 2.500; }
.commercial { fill: #fdb78f; }
.park { fill: #c3c283; }
.water { fill: #90ae92; }
.marsh { fill: #d1c789; }
.marsh-channel { fill: none; stroke: #90ae92; stroke-width: 2.500; }
.pond-line { fill: none; stroke: #b3b78f; stroke-width: 1; }
.shore { fill: none; stroke: #dfb28c; stroke-width: 8; }
.stream { fill: none; stroke: #88b195; stroke-width: 1.400; }
.ferry { fill: none; stroke: #4a9c8c; stroke-width: 1.600; stroke-dasharray: 8 3; }
.minor { fill: none; stroke: #ddb58e; stroke-width: 1.500; stroke-linejoin: round; }
.arterial { fill: none; stroke: #d7b08b; stroke-width: 3.600; stroke-linejoin: round; }
.bridge-case { fill: none; stroke: #a08c7d; stroke-width: 4; }
.bridge { fill: none; stroke: #ceab8a; stroke-width: 2.400; }
.hwy-case { fill: none; stroke: #93857e; stroke-width: 5.400; stroke-linejoin: round; }
.hwy-fill { fill: none; stroke: #ac9580; stroke-width: 3; stroke-linejoin: round; }
.junction { fill: #a8917e; }

.label {
  text-anchor: middle;
  fill: #33291f;
  stroke: #facd9f;
  stroke-width: 3px;
  stroke-linejoin: round;
  paint-order: stroke;
}
.label .ar, .label.ar { font-family: "DejaVu Sans", sans-serif; font-weight: 400; direction: rtl; letter-spacing: 0; }
.start { text-anchor: start; }
.area { font-size: 14px; font-weight: 500; }
.area .ar { font-size: 14.500px; }
.soft { fill: #5f4c3c; }
.city { font-size: 21px; font-weight: 500; }
.city .small { font-size: 15px; }
.city .lg { font-size: 27px; }
.city .xl { font-size: 38px; }
.city .lg.ar { font-size: 27px; }
.city .xl.ar { font-size: 38px; }
.road { font-size: 15px; }
.poi { font-size: 21px; }
.poi .ar { font-size: 16.500px; }
.blue { fill: #20659a; }
.purple { fill: #8b3b87; }
.grey { fill: #6b6453; }
.green { fill: #237a45; }
.pin { fill: #ffcd9f; filter: drop-shadow(0 1px 1px rgba(70, 40, 10, .6)); }
.glyph { fill: #ffcd9f; }
.glyph-line { fill: none; stroke: #ffcd9f; stroke-width: 1.800; }
.truck { fill: #007080; }
.google { font: 600 29px Inter, sans-serif; stroke: #ffcd9f; stroke-width: 2px; paint-order: stroke; }

/* controls floating above the map */
.map-type {
  position: absolute;
  left: 15px;
  top: 15px;
  display: flex;
  width: 252px;
  height: 60px;
  border-radius: 3px;
  background: #ffcd9f;
  box-shadow: 0 1px 5px rgba(80, 45, 10, .35);
  font-size: 27px;
  line-height: 62px;
  text-align: center;
}
.selected { width: 103px; font-weight: 500; color: #000; }
.other { flex: 1; color: #644e3d; border-left: 1px solid #edbe93; }
.pegman, .zoom {
  position: absolute;
  left: 936px;
  width: 60px;
  border-radius: 3px;
  background: #ffcd9f;
  box-shadow: 0 1px 5px rgba(80, 45, 10, .35);
}
.pegman { top: 257px; height: 59px; display: flex; justify-content: center; align-items: center; }
.zoom { top: 364px; height: 122px; }
.zoom svg { display: block; }
.map-footer {
  position: absolute;
  right: 0;
  bottom: 0;
  display: flex;
  width: 486px;
  height: 21px;
  padding-left: 5px;
  background: rgba(250, 205, 158, .72);
  color: #1a120b;
  font-size: 15px;
  line-height: 21px;
  white-space: nowrap;
}
.f-keys { width: 148.500px; }
.f-data { width: 133px; letter-spacing: .15px; }
.f-terms { width: 61px; letter-spacing: .15px; }
.f-report { letter-spacing: .22px; }
```
